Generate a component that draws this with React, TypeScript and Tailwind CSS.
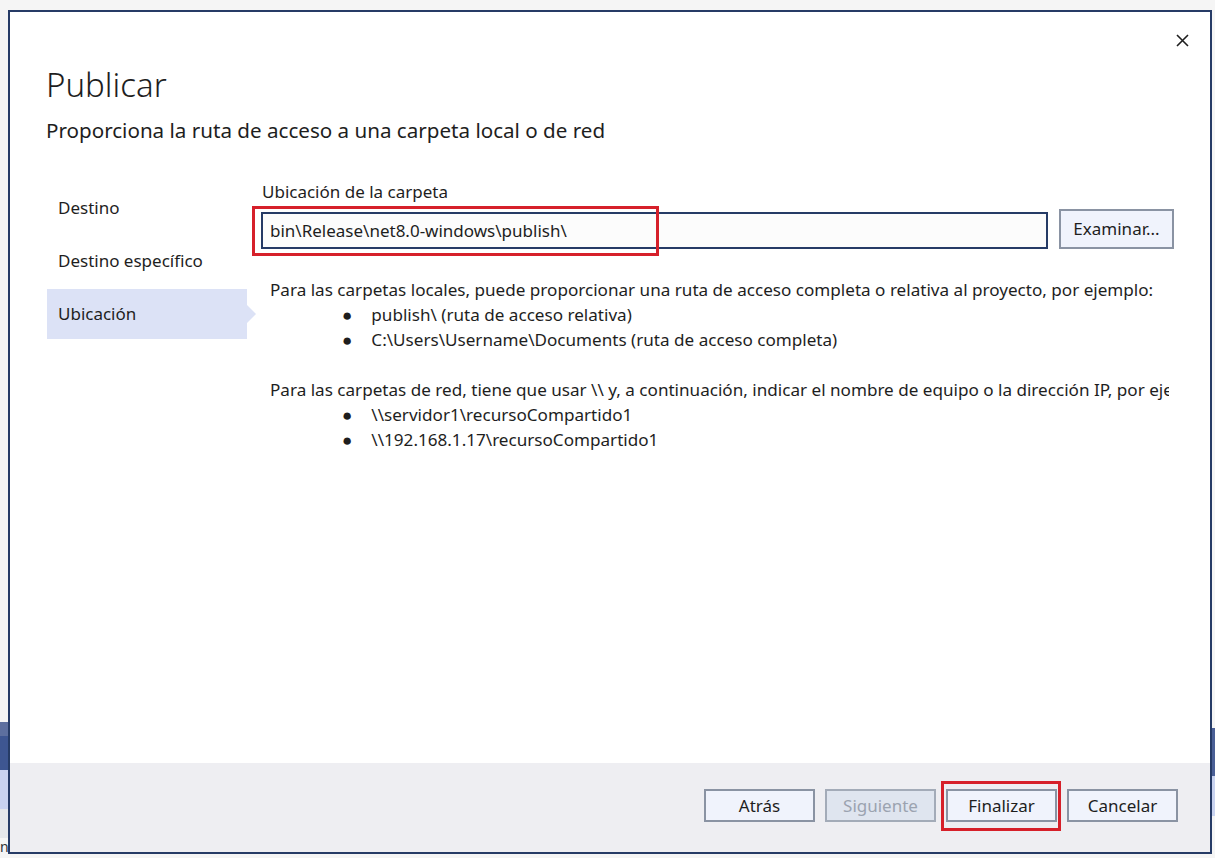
import React from "react";

const font = { fontFamily: "'Segoe UI', 'Noto Sans', 'Open Sans', sans-serif" };

function CloseIcon() {
  return (
    <svg width="13" height="13" viewBox="0 0 13 13" className="block">
      <path d="M1 1 L12 12 M12 1 L1 12" stroke="#1e1e1e" strokeWidth="1.6" fill="none" />
    </svg>
  );
}

function FooterButton({ label, disabled }: { label: string; disabled?: boolean }) {
  return (
    <button
      type="button"
      className={
        disabled
          ? "h-[33px] w-[111px] border-2 border-[#a3abb8] bg-[#dfe5ef] text-[17px] text-[#9ba3b0]"
          : "h-[33px] w-[111px] border-2 border-[#8a93a3] bg-[#f0f3fc] text-[17px] text-[#1e1e1e]"
      }
    >
      {label}
    </button>
  );
}

export default function App() {
  const sideItems = ["Destino", "Destino específico", "Ubicación"];

  return (
    <div
      className="flex h-[858px] w-[1215px] flex-col overflow-hidden bg-[#f5f5f5] text-[#1e1e1e]"
      style={font}
    >
      <div className="h-[10px] shrink-0" />
      <div className="flex h-[844px] shrink-0">
        {/* background window peeking out, left */}
        <div className="flex w-[8px] shrink-0 flex-col">
          <div className="h-[718px]" />
          <div className="h-[14px] bg-[#5d6f9f]" />
          <div className="h-[34px] bg-[#3e5692]" />
          <div className="h-[40px] bg-[#c9d3f0]" />
          <div className="h-[29px] bg-[#e5e7eb]" />
          <div className="overflow-hidden pt-[2px] text-[14px] leading-none text-[#333]">nv</div>
        </div>

        {/* dialog */}
        <div className="flex w-[1204px] shrink-0 flex-col border-2 border-[#263b66] bg-white">
          <div className="flex flex-1 flex-col">
            <div className="flex justify-end pr-[21px] pt-[22px]">
              <CloseIcon />
            </div>

            <div className="pl-[36px] pt-[17px]">
              <h1 className="text-[33px] font-light leading-[42px] text-[#1e1e1e]">Publicar</h1>
              <p className="mt-[11px] text-[20.6px] leading-[26px] text-[#1e1e1e]">
                Proporciona la ruta de acceso a una carpeta local o de red
              </p>
            </div>

            <div className="mt-[36px] flex">
              {/* sidebar */}
              <div className="ml-[37px] mt-[4px] flex w-[200px] shrink-0 flex-col gap-[3px]">
                {sideItems.map((item) => {
                  const active = item === "Ubicación";
                  return (
                    <div
                      key={item}
                      className={
                        active
                          ? "relative flex h-[50px] items-center bg-[#dce2f6] pl-[11px] text-[17px]"
                          : "flex h-[50px] items-center pl-[11px] text-[17px]"
                      }
                    >
                      {item}
                      {active && (
                        <span className="absolute right-[-9px] top-[16px] h-0 w-0 border-y-[9px] border-l-[9px] border-y-transparent border-l-[#dce2f6]" />
                      )}
                    </div>
                  );
                })}
              </div>

              {/* content */}
              <div className="ml-[14px] mt-[2px] flex w-[913px] flex-col">
                <label className="pl-[1px] text-[17px] leading-[22px]">Ubicación de la carpeta</label>
                <div className="mt-[6px] flex items-end gap-[11px]">
                  <div className="relative">
                    <div className="flex h-[37px] w-[787px] items-center border-2 border-[#263b66] bg-[#fcfcfc] pl-[7px] text-[17px]">
                      bin\Release\net8.0-windows\publish\
                    </div>
                    <span className="pointer-events-none absolute left-[-9px] top-[-6px] h-[50px] w-[407px] border-[3px] border-[#d6202a]" />
                  </div>
                  <button
                    type="button"
                    className="h-[40px] w-[115px] shrink-0 border-2 border-[#8a93a3] bg-[#f0f3fc] text-[17px]"
                  >
                    Examinar...
                  </button>
                </div>

                <div className="mt-[28px] w-[908px] overflow-hidden whitespace-nowrap pl-[9px] text-[17.1px] leading-[25px]">
                  <p>
                    Para las carpetas locales, puede proporcionar una ruta de acceso completa o relativa al proyecto, por ejemplo:
                  </p>
                  <ul className="pl-[72px]">
                    <li className="flex gap-[19px]">
                      <span>●</span>
                      <span>publish\ (ruta de acceso relativa)</span>
                    </li>
                    <li className="flex gap-[19px]">
                      <span>●</span>
                      <span>C:\Users\Username\Documents (ruta de acceso completa)</span>
                    </li>
                  </ul>
                  <p className="mt-[25px]">
                    Para las carpetas de red, tiene que usar \\ y, a continuación, indicar el nombre de equipo o la dirección IP, por ejemplo:
                  </p>
                  <ul className="pl-[72px]">
                    <li className="flex gap-[19px]">
                      <span>●</span>
                      <span>\\servidor1\recursoCompartido1</span>
                    </li>
                    <li className="flex gap-[19px]">
                      <span>●</span>
                      <span>\\192.168.1.17\recursoCompartido1</span>
                    </li>
                  </ul>
                </div>
              </div>
            </div>
          </div>

          {/* footer */}
          <div className="flex h-[89px] shrink-0 items-start justify-end gap-[10px] bg-[#eeeef2] pr-[32px] pt-[26px]">
            <FooterButton label="Atrás" />
            <FooterButton label="Siguiente" disabled />
            <div className="relative">
              <FooterButton label="Finalizar" />
              <span className="pointer-events-none absolute left-[-5px] top-[-8px] h-[50px] w-[120px] border-[3px] border-[#d6202a]" />
            </div>
            <FooterButton label="Cancelar" />
          </div>
        </div>

        {/* background window peeking out, right */}
        <div className="flex w-[3px] shrink-0 flex-col">
          <div className="h-[718px]" />
          <div className="h-[48px] bg-[#4a5f96]" />
          <div className="h-[40px] bg-[#c9d3f0]" />
        </div>
      </div>
      <div className="pl-[25px] text-[14px] leading-none text-[#333]">ere</div>
    </div>
  );
}
